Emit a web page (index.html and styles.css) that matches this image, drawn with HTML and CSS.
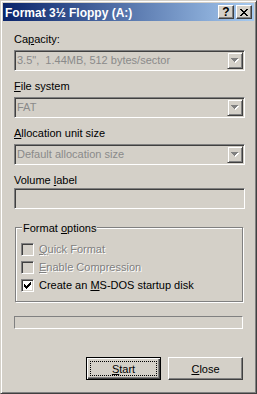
FILE: index.html
```html
<!DOCTYPE html>
<html lang="en">
<head>
  <meta charset="UTF-8">
  <title>Format 3½ Floppy (A:)</title>
  <link rel="stylesheet" href="styles.css">
</head>
<body>
  <div class="window">
    <div class="titlebar">
      <span class="title">Format 3½ Floppy (A:)</span>
      <div class="title-buttons">
        <span class="tbtn help">?</span>
        <span class="tbtn">
          <svg width="8" height="7" viewBox="0 0 8 7"><path fill="#000" d="M0 0h2v1H0z M6 0h2v1H6z M1 1h2v1H1z M5 1h2v1H5z M2 2h4v1H2z M3 3h2v1H3z M2 4h4v1H2z M1 5h2v1H1z M5 5h2v1H5z M0 6h2v1H0z M6 6h2v1H6z"/></svg>
        </span>
      </div>
    </div>

    <div class="content">
      <div class="label first">Ca<u>p</u>acity:</div>
      <div class="combo">
        <span class="combo-text">3.5",&nbsp; 1.44MB, 512 bytes/sector</span>
        <span class="combo-btn"><svg width="8" height="5" viewBox="0 0 8 5"><path fill="#fff" d="M1 1h7v1H1z M2 2h5v1H2z M3 3h3v1H3z M4 4h1v1H4z"/><path fill="#808080" d="M0 0h7v1H0z M1 1h5v1H1z M2 2h3v1H2z M3 3h1v1H3z"/></svg></span>
      </div>

      <div class="label"><u>F</u>ile system</div>
      <div class="combo">
        <span class="combo-text">FAT</span>
        <span class="combo-btn"><svg width="8" height="5" viewBox="0 0 8 5"><path fill="#fff" d="M1 1h7v1H1z M2 2h5v1H2z M3 3h3v1H3z M4 4h1v1H4z"/><path fill="#808080" d="M0 0h7v1H0z M1 1h5v1H1z M2 2h3v1H2z M3 3h1v1H3z"/></svg></span>
      </div>

      <div class="label"><u>A</u>llocation unit size</div>
      <div class="combo">
        <span class="combo-text">Default allocation size</span>
        <span class="combo-btn"><svg width="8" height="5" viewBox="0 0 8 5"><path fill="#fff" d="M1 1h7v1H1z M2 2h5v1H2z M3 3h3v1H3z M4 4h1v1H4z"/><path fill="#808080" d="M0 0h7v1H0z M1 1h5v1H1z M2 2h3v1H2z M3 3h1v1H3z"/></svg></span>
      </div>

      <div class="label tight">Volume <u>l</u>abel</div>
      <div class="edit"></div>

      <div class="group">
        <span class="group-title">Format <u>o</u>ptions</span>
        <div class="check-row disabled">
          <span class="checkbox"></span>
          <span class="check-label"><u>Q</u>uick Format</span>
        </div>
        <div class="check-row disabled">
          <span class="checkbox"></span>
          <span class="check-label"><u>E</u>nable Compression</span>
        </div>
        <div class="check-row">
          <span class="checkbox checked">
            <svg width="7" height="7" viewBox="0 0 7 7"><path fill="#000" d="M6 0h1v1H6z M5 1h2v1H5z M0 2h1v1H0z M4 2h3v1H4z M0 3h2v1H0z M3 3h3v1H3z M0 4h5v1H0z M1 5h3v1H1z M2 6h1v1H2z"/></svg>
          </span>
          <span class="check-label">Create an <u>M</u>S-DOS startup disk</span>
        </div>
      </div>

      <div class="progress"></div>

      <div class="actions">
        <button type="button" class="btn default"><u>S</u>tart</button>
        <button type="button" class="btn"><u>C</u>lose</button>
      </div>
    </div>
  </div>
</body>
</html>
```

FILE: styles.css
```css
/* Base */
* {
  margin: 0;
  padding: 0;
  box-sizing: border-box;
}
body {
  font-family: 'Liberation Sans', Arial, sans-serif;
  font-size: 11px;
  color: #000;
  background: #d4d0c8;
}
u {
  text-decoration: underline;
  text-underline-offset: 1px;
}

/* Window frame */
.window {
  width: 257px;
  height: 394px;
  background: #d4d0c8;
  border: 1px solid;
  border-color: #d4d0c8 #404040 #404040 #d4d0c8;
  box-shadow: inset 1px 1px #fff, inset -1px -1px #808080;
  padding: 2px;
  display: flex;
  flex-direction: column;
}

/* Title bar */
.titlebar {
  height: 18px;
  display: flex;
  align-items: center;
  justify-content: space-between;
  padding: 0 2px;
  background: linear-gradient(to right, #0a246a, #a6caf0);
  color: #fff;
}
.title {
  font-weight: bold;
  font-size: 12px;
  line-height: 16px;
  padding-top: 2px;
}
.title-buttons {
  display: flex;
  gap: 2px;
}
.tbtn {
  width: 16px;
  height: 14px;
  display: flex;
  align-items: center;
  justify-content: center;
  background: #d4d0c8;
  color: #000;
  border: 1px solid;
  border-color: #fff #404040 #404040 #fff;
  box-shadow: inset -1px -1px #808080;
}
.tbtn.help {
  font-weight: bold;
  font-size: 12px;
  line-height: 12px;
}

/* Content */
.content {
  flex: 1;
  padding: 12px 9px 0 11px;
}
.label {
  line-height: 13px;
  margin-top: 9px;
  margin-bottom: 4px;
}
.label.first {
  margin-top: 0;
}
.label.tight {
  margin-bottom: 1px;
}

/* Combo boxes (disabled) */
.combo {
  height: 21px;
  display: flex;
  border: 1px solid;
  border-color: #808080 #fff #fff #808080;
  box-shadow: inset 1px 1px #404040, inset -1px -1px #d4d0c8;
  padding: 1px;
}
.combo-text {
  flex: 1;
  line-height: 17px;
  padding-left: 1px;
  color: #8a8a8a;
  white-space: nowrap;
}
.combo-btn {
  width: 16px;
  height: 17px;
  display: flex;
  align-items: center;
  justify-content: center;
  border: 1px solid;
  border-color: #d4d0c8 #404040 #404040 #d4d0c8;
  box-shadow: inset 1px 1px #fff, inset -1px -1px #808080;
}

/* Edit box (disabled) */
.edit {
  height: 21px;
  border: 1px solid;
  border-color: #808080 #fff #fff #808080;
  box-shadow: inset 1px 1px #404040, inset -1px -1px #d4d0c8;
}

/* Group box */
.group {
  position: relative;
  margin: 18px 2px 0 1px;
  height: 75px;
  border: 1px solid #808080;
  box-shadow: inset 1px 1px #fff, 1px 1px #fff;
  padding: 15px 0 0 5px;
  display: flex;
  flex-direction: column;
  gap: 5px;
}
.group-title {
  position: absolute;
  top: -6px;
  left: 6px;
  padding: 0 1px;
  line-height: 13px;
  background: #d4d0c8;
}
.check-row {
  display: flex;
  align-items: center;
  gap: 5px;
  height: 13px;
  line-height: 13px;
}
.checkbox {
  width: 13px;
  height: 13px;
  display: flex;
  align-items: center;
  justify-content: center;
  background: #d4d0c8;
  border: 1px solid;
  border-color: #808080 #fff #fff #808080;
  box-shadow: inset 1px 1px #404040, inset -1px -1px #d4d0c8;
}
.checkbox.checked {
  background: #fff;
}
.check-row.disabled .check-label {
  color: #808080;
  text-shadow: 1px 1px 0 #fff;
}

/* Progress bar */
.progress {
  height: 13px;
  margin: 14px 2px 0 0;
  border: 1px solid;
  border-color: #808080 #fff #fff #808080;
}

/* Buttons */
.actions {
  display: flex;
  justify-content: flex-end;
  gap: 7px;
  margin: 28px 2px 0 0;
}
.btn {
  position: relative;
  width: 75px;
  height: 23px;
  font-family: inherit;
  font-size: 11px;
  color: #000;
  background: #d4d0c8;
  border: 1px solid;
  border-color: #fff #404040 #404040 #fff;
  box-shadow: inset -1px -1px #808080;
  cursor: pointer;
}
.btn.default {
  border-color: #000;
  box-shadow: inset 1px 1px #fff, inset -1px -1px #404040, inset -2px -2px #808080;
}
.btn.default::after {
  content: '';
  position: absolute;
  inset: 3px;
  border: 1px dotted #000;
}
```
